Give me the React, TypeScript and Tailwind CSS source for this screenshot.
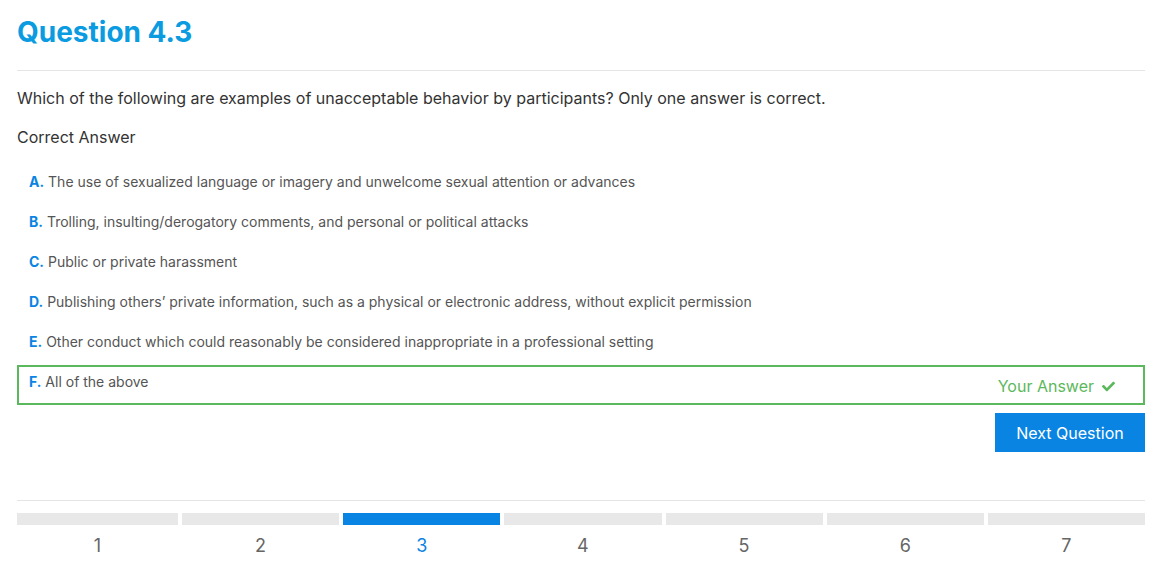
import { FaCheck } from 'react-icons/fa';

const OPTIONS = [
  { key: 'A', text: 'The use of sexualized language or imagery and unwelcome sexual attention or advances' },
  { key: 'B', text: 'Trolling, insulting/derogatory comments, and personal or political attacks' },
  { key: 'C', text: 'Public or private harassment' },
  { key: 'D', text: 'Publishing others’ private information, such as a physical or electronic address, without explicit permission' },
  { key: 'E', text: 'Other conduct which could reasonably be considered inappropriate in a professional setting' },
];

const STEPS = [1, 2, 3, 4, 5, 6, 7];
const CURRENT = 3;

export default function App() {
  return (
    <div className="min-h-screen bg-white px-[17px] pt-[15px] font-['Inter','Noto_Sans',sans-serif]">
      <h1 className="text-[28px] leading-[34px] font-bold text-[#0a9be0]">Question 4.3</h1>
      <div className="mt-[21px] h-px bg-[#e5e5e5]" />

      <p className="mt-[15px] text-base leading-6 text-[#333]">
        Which of the following are examples of unacceptable behavior by participants? Only one answer is correct.
      </p>
      <p className="mt-[15px] text-base leading-6 text-[#333]">Correct Answer</p>

      {/* 选项列表 */}
      <div className="mt-[13px]">
        {OPTIONS.map(opt => (
          <div key={opt.key} className="px-3 py-[10px] text-sm leading-5 text-[#555]">
            <span className="font-bold text-[#0984e3]">{opt.key}.</span> {opt.text}
          </div>
        ))}
        <div className="mt-[3px] flex items-start justify-between border-2 border-[#5cb85c] pl-[10px] pr-[28px] pt-[5px] pb-[5px]">
          <div className="text-sm leading-5 text-[#555]">
            <span className="font-bold text-[#0984e3]">F.</span> All of the above
          </div>
          <div className="mt-[2px] flex items-center gap-2 text-base leading-6 text-[#5cb85c]">
            <span>Your Answer</span>
            <FaCheck className="h-[13px] w-[13px]" />
          </div>
        </div>
      </div>

      <div className="mt-2 flex justify-end">
        <button className="h-[39px] w-[150px] bg-[#0984e3] text-base text-white">Next Question</button>
      </div>

      <div className="mt-[48px] h-px bg-[#e5e5e5]" />

      {/* 进度条 */}
      <div className="mt-3 grid grid-cols-[161px_repeat(6,1fr)] gap-1">
        {STEPS.map(n => (
          <div key={n} className="flex flex-col items-center">
            <div className={`h-3 w-full ${n === CURRENT ? 'bg-[#0984e3]' : 'bg-[#e8e8e8]'}`} />
            <span className={`mt-2 text-lg leading-[26px] ${n === CURRENT ? 'text-[#0984e3]' : 'text-[#666]'}`}>{n}</span>
          </div>
        ))}
      </div>
    </div>
  );
}
